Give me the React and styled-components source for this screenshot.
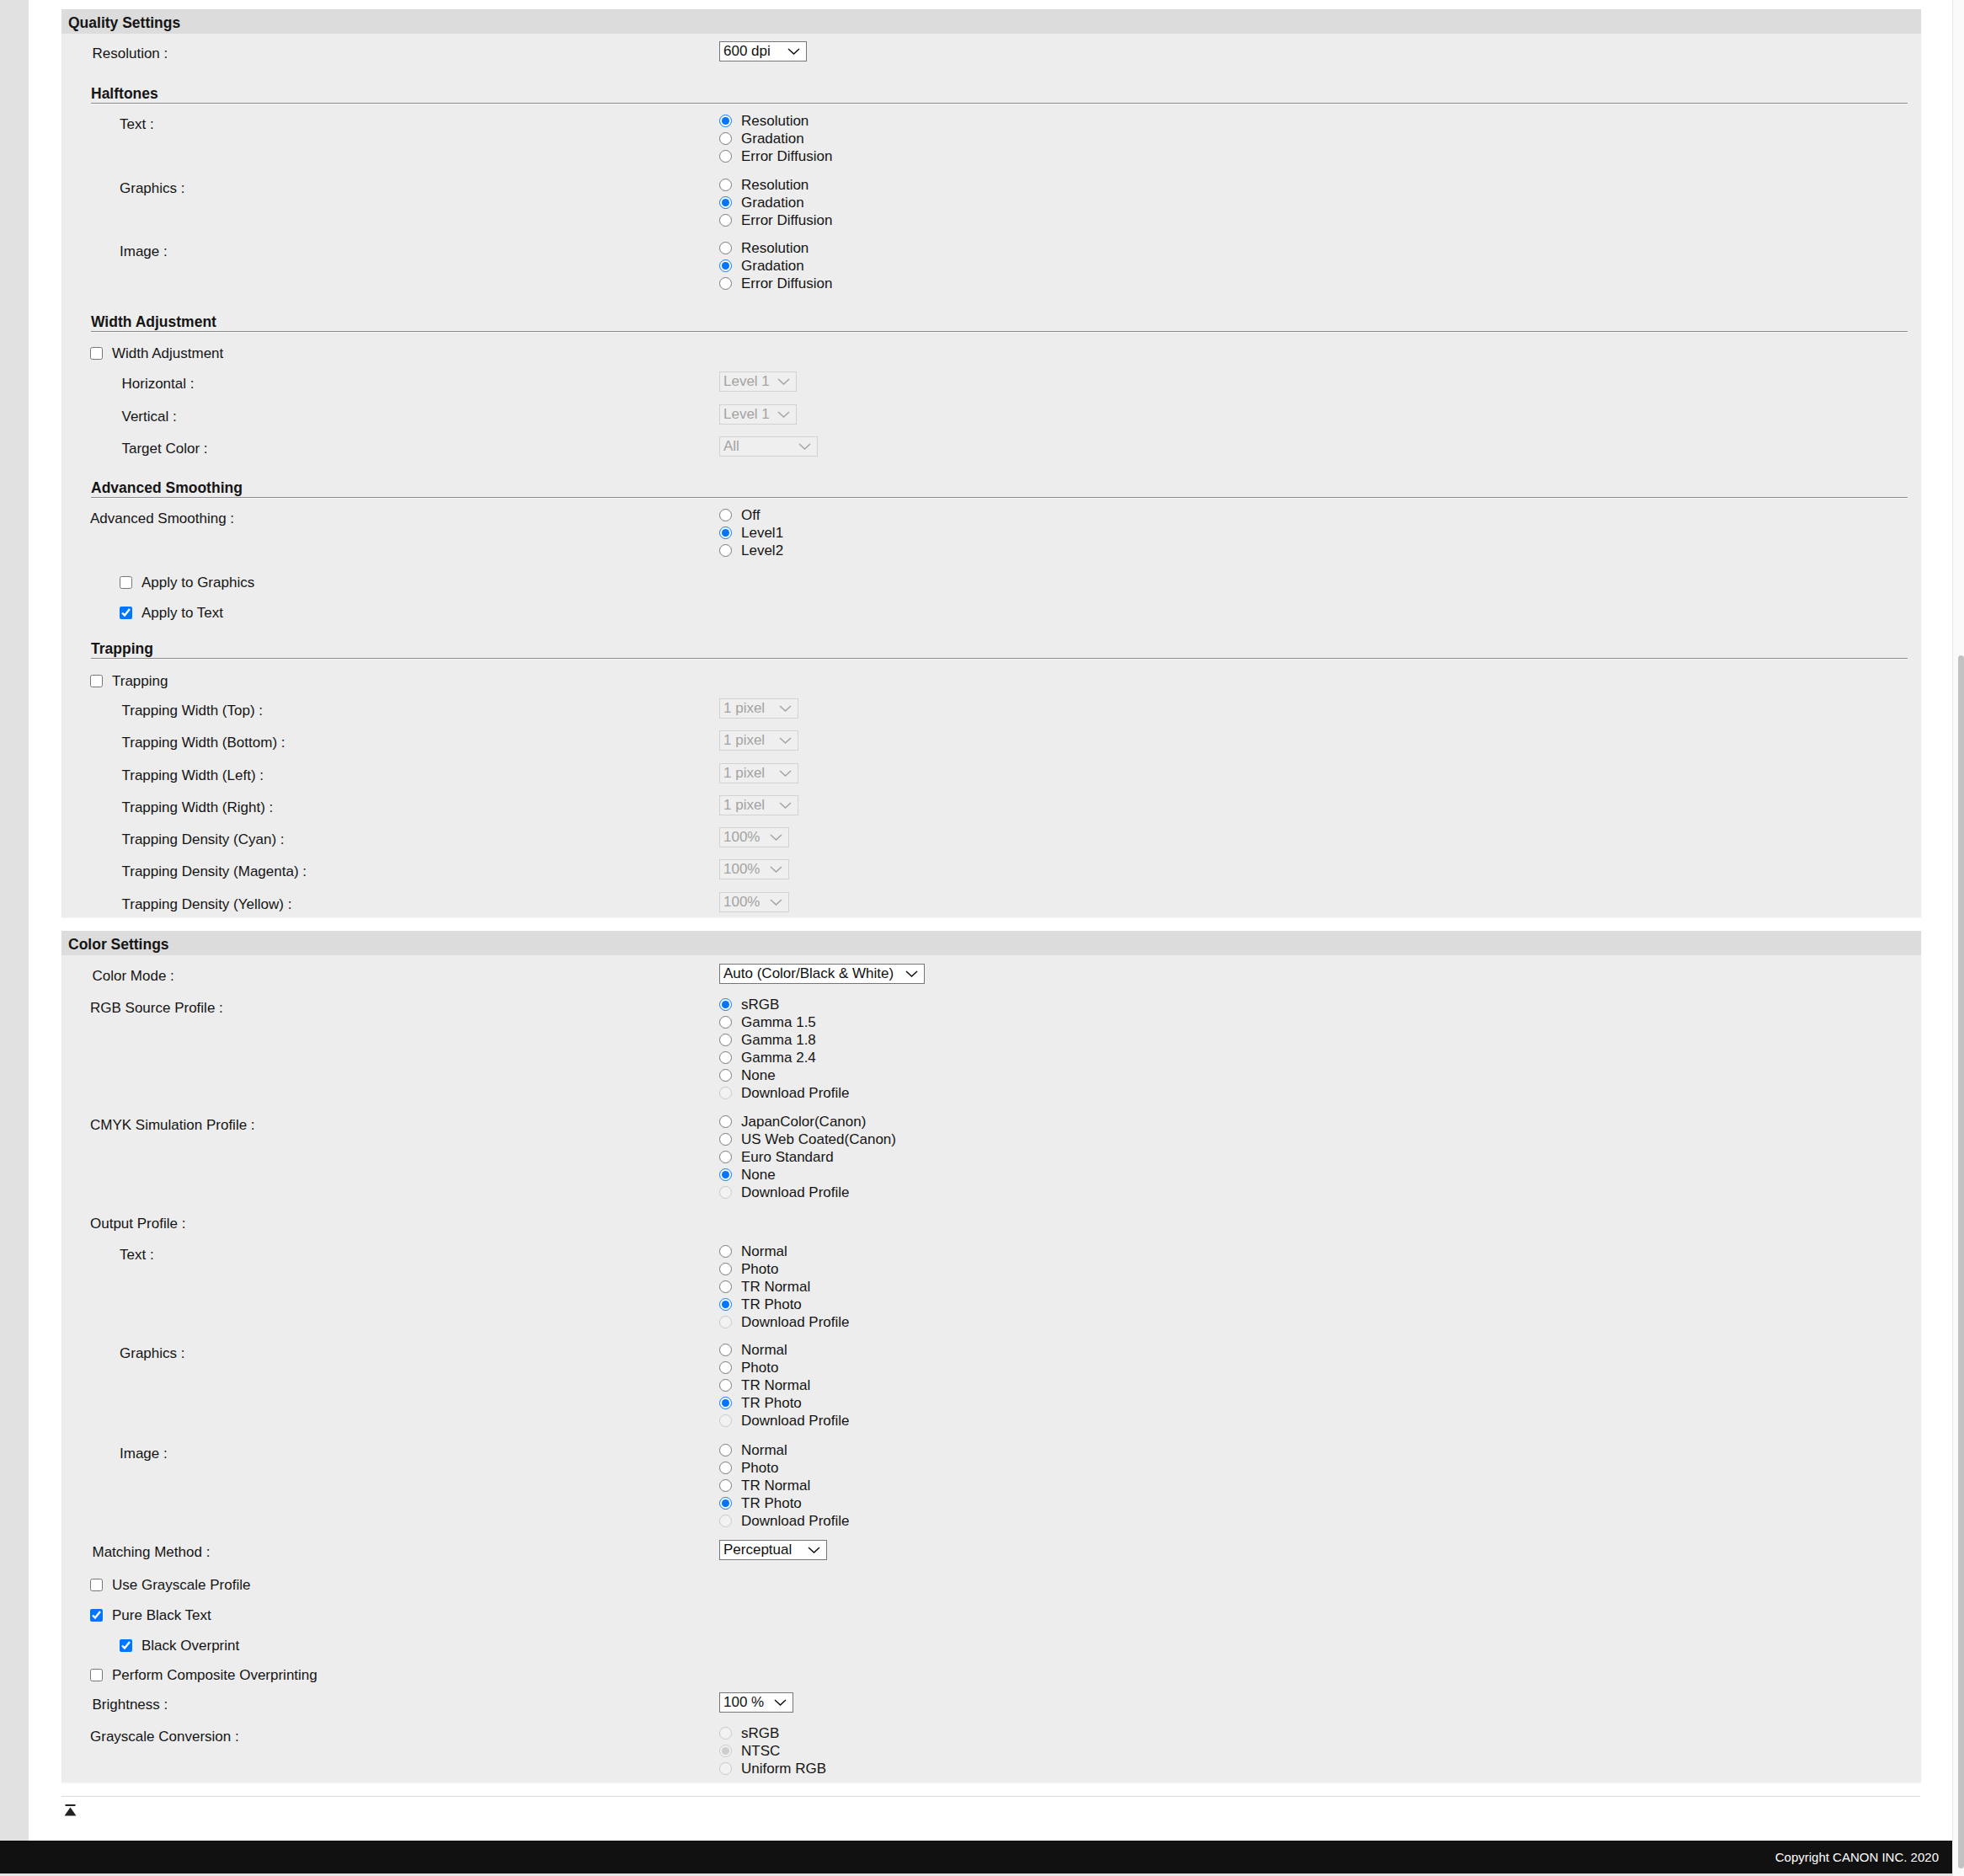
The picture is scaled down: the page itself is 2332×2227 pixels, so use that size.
import React from "react";
import styled, { createGlobalStyle } from "styled-components";

const GlobalStyle = createGlobalStyle`
  html, body {
    margin: 0;
    padding: 0;
    background: #fff;
  }
  body {
    font-family: "Liberation Sans", Arial, sans-serif;
    font-size: 17px;
    color: #151515;
  }
`;

const Screen = styled.div`
  display: flex;
  width: 2332px;
  height: 2227px;
  overflow: hidden;
`;

const Main = styled.div`
  width: 2318px;
  display: flex;
  flex-direction: column;
`;

const Body = styled.div`
  display: flex;
  flex: 1;
`;

const SideStrip = styled.div`
  width: 34px;
  flex-shrink: 0;
  background: #e1e1e1;
`;

const Content = styled.div`
  flex: 1;
  display: flex;
  flex-direction: column;
  padding: 11px 37px 0 39px;
`;

const Panel = styled.section`
  background: #ededed;
  padding-bottom: ${(p) => p.$pb}px;
  box-shadow: 0 1px 2px rgba(0, 0, 0, 0.05);

  & + & {
    margin-top: 16px;
  }
`;

const PanelHeader = styled.div`
  height: 29px;
  box-sizing: border-box;
  padding: 4px 0 0 8px;
  line-height: 25px;
  background: #dcdcdc;
  font-weight: bold;
  font-size: 17.5px;
`;

const SubHeading = styled.h3`
  margin: ${(p) => p.$mt}px 16px 0 35px;
  font-size: 17.5px;
  font-weight: bold;
  line-height: 21px;
  border-bottom: 1px solid #8c8c8c;
  box-shadow: 0 1px 0 #f8f8f8;
`;

const Row = styled.div`
  display: grid;
  grid-template-columns: 781px 1fr;
  align-items: start;
  margin-top: ${(p) => p.$mt}px;
`;

const Label = styled.div`
  padding-left: ${(p) => p.$indent}px;
  padding-top: ${(p) => (p.$pt === undefined ? 5 : p.$pt)}px;
  line-height: 19px;
  white-space: nowrap;
`;

const RadioList = styled.div`
  display: flex;
  flex-direction: column;
`;

const RadioItem = styled.label`
  display: flex;
  align-items: center;
  gap: 11px;
  height: 21px;
  line-height: 21px;
  white-space: nowrap;
`;

const Radio = styled.input`
  width: 15px;
  height: 15px;
  margin: 0;
  accent-color: #0075ff;
`;

const CheckRow = styled.label`
  display: flex;
  align-items: center;
  gap: 11px;
  height: 21px;
  line-height: 21px;
  margin-top: ${(p) => p.$mt}px;
  padding-left: ${(p) => p.$indent}px;
`;

const Check = styled.input`
  width: 15px;
  height: 15px;
  margin: 0;
  accent-color: #0075ff;
`;

const SelectBox = styled.div`
  display: inline-flex;
  align-items: center;
  justify-content: space-between;
  box-sizing: border-box;
  width: ${(p) => p.$w}px;
  height: 24px;
  padding: 0 7px 0 4px;
  border: 1px solid ${(p) => (p.$disabled ? "#d2d2d2" : "#767676")};
  background: ${(p) => (p.$disabled ? "#efefef" : "#fff")};
  color: ${(p) => (p.$disabled ? "#a3a3a3" : "#111")};
  white-space: nowrap;
`;

const Chevron = styled.svg`
  width: 15px;
  height: 8px;
  flex-shrink: 0;
  fill: none;
  stroke: currentColor;
  stroke-width: 1.5;
`;

const Divider = styled.hr`
  margin: 16px 1px 0 0;
  border: 0;
  border-top: 1px solid #dcdcdc;
`;

const TopLink = styled.a`
  display: block;
  width: 15px;
  height: 14px;
  margin: 8px 0 0 3px;
  color: #222;
`;

const Footer = styled.footer`
  height: 39px;
  flex-shrink: 0;
  display: flex;
  align-items: center;
  justify-content: flex-end;
  padding-right: 16px;
  background: #111;
  color: #fff;
  font-size: 15px;
`;

const BottomStrip = styled.div`
  height: 3px;
  flex-shrink: 0;
  background: #e6e6e6;
`;

const ScrollTrack = styled.div`
  width: 14px;
  box-sizing: border-box;
  display: flex;
  flex-direction: column;
  padding: 778px 0 9px 6px;
  border-left: 1px solid #e8e8e8;
  background: #fafafa;
`;

const ScrollThumb = styled.div`
  flex: 1;
  border-radius: 4px;
  background: #c2c2c2;
`;

const RadioGroup = ({ name, options, checked, disabled = [] }) => (
  <RadioList>
    {options.map((opt, i) => (
      <RadioItem key={opt}>
        <Radio
          type="radio"
          name={name}
          defaultChecked={i === checked}
          disabled={disabled.includes(i)}
        />
        {opt}
      </RadioItem>
    ))}
  </RadioList>
);

const Dropdown = ({ value, width, disabled }) => (
  <div>
    <SelectBox $w={width} $disabled={disabled}>
      <span>{value}</span>
      <Chevron viewBox="0 0 15 8">
        <polyline points="1,1 7.5,7 14,1" />
      </Chevron>
    </SelectBox>
  </div>
);

const halftone = ["Resolution", "Gradation", "Error Diffusion"];
const output = ["Normal", "Photo", "TR Normal", "TR Photo", "Download Profile"];
const trapping = [
  ["Trapping Width (Top) :", "1 pixel", 94],
  ["Trapping Width (Bottom) :", "1 pixel", 94],
  ["Trapping Width (Left) :", "1 pixel", 94],
  ["Trapping Width (Right) :", "1 pixel", 94],
  ["Trapping Density (Cyan) :", "100%", 83],
  ["Trapping Density (Magenta) :", "100%", 83],
  ["Trapping Density (Yellow) :", "100%", 83],
];

const App = () => {
  return (
    <Screen>
      <GlobalStyle />
      <Main>
        <Body>
          <SideStrip />
          <Content>
            <Panel $pb={6.5}>
              <PanelHeader>Quality Settings</PanelHeader>
              <Row $mt={9}>
                <Label $indent={36.5}>Resolution :</Label>
                <Dropdown value="600 dpi" width={104} />
              </Row>

              <SubHeading $mt={28}>Halftones</SubHeading>
              <Row $mt={10}>
                <Label $indent={69}>Text :</Label>
                <RadioGroup name="ht-text" options={halftone} checked={0} />
              </Row>
              <Row $mt={13}>
                <Label $indent={69}>Graphics :</Label>
                <RadioGroup name="ht-graphics" options={halftone} checked={1} />
              </Row>
              <Row $mt={12}>
                <Label $indent={69}>Image :</Label>
                <RadioGroup name="ht-image" options={halftone} checked={1} />
              </Row>

              <SubHeading $mt={25}>Width Adjustment</SubHeading>
              <CheckRow $mt={15} $indent={34}>
                <Check type="checkbox" />
                Width Adjustment
              </CheckRow>
              <Row $mt={11}>
                <Label $indent={71.5}>Horizontal :</Label>
                <Dropdown value="Level 1" width={92} disabled />
              </Row>
              <Row $mt={14.5}>
                <Label $indent={71.5}>Vertical :</Label>
                <Dropdown value="Level 1" width={92} disabled />
              </Row>
              <Row $mt={14.5}>
                <Label $indent={71.5}>Target Color :</Label>
                <Dropdown value="All" width={117} disabled />
              </Row>

              <SubHeading $mt={27}>Advanced Smoothing</SubHeading>
              <Row $mt={10}>
                <Label $indent={34}>Advanced Smoothing :</Label>
                <RadioGroup
                  name="smoothing"
                  options={["Off", "Level1", "Level2"]}
                  checked={1}
                />
              </Row>
              <CheckRow $mt={17} $indent={69}>
                <Check type="checkbox" />
                Apply to Graphics
              </CheckRow>
              <CheckRow $mt={15} $indent={69}>
                <Check type="checkbox" defaultChecked />
                Apply to Text
              </CheckRow>

              <SubHeading $mt={22}>Trapping</SubHeading>
              <CheckRow $mt={16} $indent={34}>
                <Check type="checkbox" />
                Trapping
              </CheckRow>
              {trapping.map(([label, value, w], i) => (
                <Row key={label} $mt={i === 0 ? 10 : 14.3}>
                  <Label $indent={71.5}>{label}</Label>
                  <Dropdown value={value} width={w} disabled />
                </Row>
              ))}
            </Panel>

            <Panel $pb={6}>
              <PanelHeader>Color Settings</PanelHeader>
              <Row $mt={10}>
                <Label $indent={36.5}>Color Mode :</Label>
                <Dropdown value="Auto (Color/Black & White)" width={244} />
              </Row>
              <Row $mt={14}>
                <Label $indent={34}>RGB Source Profile :</Label>
                <RadioGroup
                  name="rgb"
                  options={["sRGB", "Gamma 1.5", "Gamma 1.8", "Gamma 2.4", "None", "Download Profile"]}
                  checked={0}
                  disabled={[5]}
                />
              </Row>
              <Row $mt={13}>
                <Label $indent={34}>CMYK Simulation Profile :</Label>
                <RadioGroup
                  name="cmyk"
                  options={["JapanColor(Canon)", "US Web Coated(Canon)", "Euro Standard", "None", "Download Profile"]}
                  checked={3}
                  disabled={[4]}
                />
              </Row>
              <Row $mt={16}>
                <Label $indent={34} $pt={1}>Output Profile :</Label>
              </Row>
              <Row $mt={13}>
                <Label $indent={69}>Text :</Label>
                <RadioGroup name="out-text" options={output} checked={3} disabled={[4]} />
              </Row>
              <Row $mt={12}>
                <Label $indent={69}>Graphics :</Label>
                <RadioGroup name="out-graphics" options={output} checked={3} disabled={[4]} />
              </Row>
              <Row $mt={14}>
                <Label $indent={69}>Image :</Label>
                <RadioGroup name="out-image" options={output} checked={3} disabled={[4]} />
              </Row>
              <Row $mt={12}>
                <Label $indent={36.5}>Matching Method :</Label>
                <Dropdown value="Perceptual" width={128} />
              </Row>
              <CheckRow $mt={19} $indent={34}>
                <Check type="checkbox" />
                Use Grayscale Profile
              </CheckRow>
              <CheckRow $mt={15} $indent={34}>
                <Check type="checkbox" defaultChecked />
                Pure Black Text
              </CheckRow>
              <CheckRow $mt={15} $indent={69}>
                <Check type="checkbox" defaultChecked />
                Black Overprint
              </CheckRow>
              <CheckRow $mt={14} $indent={34}>
                <Check type="checkbox" />
                Perform Composite Overprinting
              </CheckRow>
              <Row $mt={10}>
                <Label $indent={36.5}>Brightness :</Label>
                <Dropdown value="100 %" width={88} />
              </Row>
              <Row $mt={14}>
                <Label $indent={34}>Grayscale Conversion :</Label>
                <RadioGroup
                  name="gray"
                  options={["sRGB", "NTSC", "Uniform RGB"]}
                  checked={1}
                  disabled={[0, 1, 2]}
                />
              </Row>
            </Panel>

            <Divider />
            <TopLink href="#top" aria-label="Back to top">
              <svg width="15" height="14" viewBox="0 0 15 14">
                <rect x="1.5" y="0" width="12" height="2" fill="currentColor" />
                <polygon points="7.5,3.5 14.5,13.5 0.5,13.5" fill="currentColor" />
              </svg>
            </TopLink>
          </Content>
        </Body>
        <Footer>Copyright CANON INC. 2020</Footer>
        <BottomStrip />
      </Main>
      <ScrollTrack>
        <ScrollThumb />
      </ScrollTrack>
    </Screen>
  );
};

export default App;
